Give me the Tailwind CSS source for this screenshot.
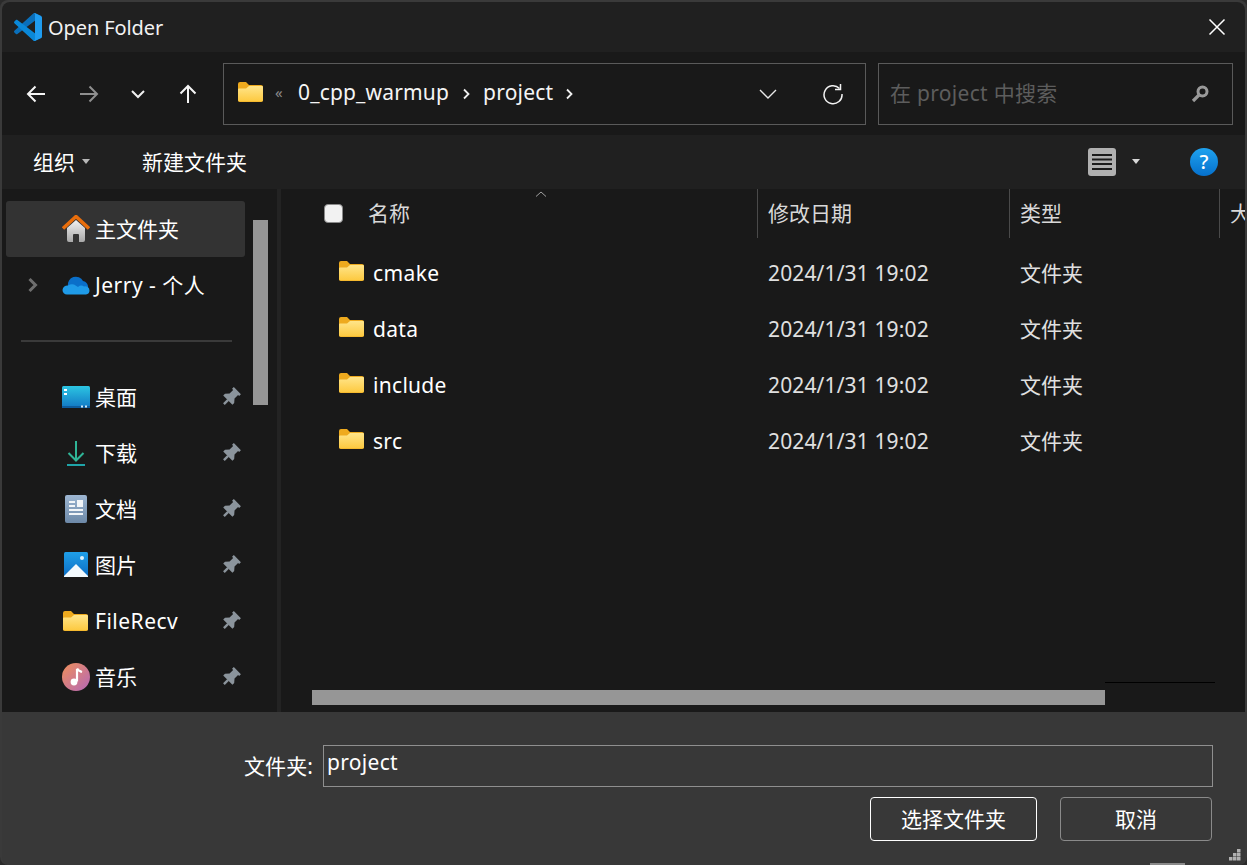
<!DOCTYPE html>
<html lang="zh"><head><meta charset="utf-8"><script src="https://cdn.jsdelivr.net/npm/@tailwindcss/browser@4"></script></head>
<body class="m-0 bg-[#2a2a2a] overflow-hidden">
<svg width="0" height="0" class="absolute"><defs>
<linearGradient id="fg" x1="0" y1="0" x2="0" y2="1"><stop offset="0" stop-color="#ffe58a"/><stop offset="1" stop-color="#fdc93f"/></linearGradient>
<linearGradient id="mg" x1="0" y1="0" x2="1" y2="1"><stop offset="0" stop-color="#f0905a"/><stop offset="1" stop-color="#b467b8"/></linearGradient>
<linearGradient id="hg" x1="0" y1="0" x2="0" y2="1"><stop offset="0" stop-color="#f2f2f2"/><stop offset="1" stop-color="#a8a8a8"/></linearGradient>
<linearGradient id="dg" x1="0" y1="0" x2="0" y2="1"><stop offset="0" stop-color="#2cc5e2"/><stop offset="1" stop-color="#1277c4"/></linearGradient>
<linearGradient id="pg" x1="0" y1="0" x2="0" y2="1"><stop offset="0" stop-color="#1f9fe8"/><stop offset="1" stop-color="#0b6cc4"/></linearGradient>
<linearGradient id="docg" x1="0" y1="0" x2="0" y2="1"><stop offset="0" stop-color="#9db6d2"/><stop offset="1" stop-color="#6d89a8"/></linearGradient>
<symbol id="folder" viewBox="0 0 25 20"><path d="M0 2a2 2 0 0 1 2-2h6l3 3h12a2 2 0 0 1 2 2v13a2 2 0 0 1-2 2H2a2 2 0 0 1-2-2z" fill="#eeaa1e"/><path d="M0 7.500a1 1 0 0 1 1-1h7l3-2.500h13a1 1 0 0 1 1 1v13a1.500 1.500 0 0 1-1.500 1.500h-22A1.500 1.500 0 0 1 0 18z" fill="url(#fg)"/></symbol>
<symbol id="pin" viewBox="-1 -1 20 20"><g transform="rotate(45 9 9)" fill="#8b949c"><path d="M4 0h10v2.500h-1.500v5l3 3.500v2.500H2.500V11l3-3.500v-5H4z"/><rect x="7.800" y="13" width="2.400" height="6"/></g></symbol>
</defs></svg>

<div class="w-[1247px] h-[865px] flex flex-col pl-[2px] pr-[2px] pt-[2px] overflow-hidden rounded-[8px] bg-[#3a3a3a] text-white text-[21px] leading-none relative" style="font-family:'Noto Sans','Noto Sans CJK SC',sans-serif">

  <!-- title -->
  <div class="h-[50px] shrink-0 bg-[#202020] flex items-center pl-[12px] pr-[19px] rounded-t-[8px]">
    <svg width="28" height="28" viewBox="0 0 100 100" class="shrink-0"><path d="M96.500 10.800 75.900.9c-2.400-1.200-5.200-.7-7.100 1.200L1.400 63.600c-1.800 1.700-1.800 4.500 0 6.200l5.500 5c1.500 1.300 3.700 1.400 5.300.2L93.400 13.500c2.700-2 6.600-.1 6.600 3.300v-.2c0-2.400-1.400-4.600-3.500-5.800z" fill="#0a6fba"/><path d="M96.500 89.200 75.900 99.100c-2.400 1.200-5.200.7-7.100-1.200L1.400 36.400c-1.800-1.700-1.800-4.500 0-6.200l5.500-5c1.500-1.300 3.700-1.400 5.300-.2L93.400 86.500c2.700 2 6.600.1 6.600-3.300v.2c0 2.400-1.400 4.600-3.500 5.800z" fill="#0a88d8"/><path d="M75.900 99.100c-2.400 1.200-5.200.6-7.100-1.200 2.300 2.300 6.200.7 6.200-2.600V4.700c0-3.300-3.900-4.900-6.200-2.600 1.900-1.900 4.700-2.400 7.100-1.200l20.600 9.900c2.200 1 3.500 3.200 3.500 5.600v67.200c0 2.400-1.400 4.600-3.500 5.600z" fill="#1f9cf0"/></svg>
    <span class="ml-[6px] text-[20px] text-[#f2f2f2] mt-[2px] tracking-[-0.1px]">Open Folder</span>
    <svg width="18" height="18" viewBox="0 0 18 18" class="ml-auto"><path d="M1.500 1.500l15 15M16.500 1.500l-15 15" stroke="#fff" stroke-width="1.500" fill="none"/></svg>
  </div>

  <!-- nav -->
  <div class="h-[83px] shrink-0 bg-[#191919] flex items-center pr-[12px]">
    <div class="w-[221px] shrink-0 relative h-full flex items-center">
      <svg width="20" height="20" viewBox="0 0 20 20" class="ml-[24px]"><path d="M19 10H2M9.500 2.500 2 10l7.500 7.500" stroke="#f5f5f5" stroke-width="2" fill="none"/></svg>
      <svg width="20" height="20" viewBox="0 0 20 20" class="ml-[33px]"><path d="M1 10h17M10.500 2.500 18 10l-7.500 7.500" stroke="#8f8f8f" stroke-width="2" fill="none"/></svg>
      <svg width="14" height="10" viewBox="0 0 14 10" class="ml-[32px]"><path d="M1 2l6 6 6-6" stroke="#f0f0f0" stroke-width="2" fill="none"/></svg>
      <svg width="20" height="20" viewBox="0 0 20 20" class="ml-[33px]"><path d="M10 19V2M2.500 9.500 10 2l7.500 7.500" stroke="#f5f5f5" stroke-width="2" fill="none"/></svg>
    </div>
    <div class="w-[643px] shrink-0 h-[62px] border border-[#5a5a5a] flex items-center pl-[14px] pr-[21px]">
      <svg width="25" height="20" class="shrink-0 mb-[4px]"><use href="#folder"/></svg>
      <span class="ml-[12px] text-[15px] text-[#8a8a8a] mb-[3px] w-[10px]">«</span>
      <span class="ml-[13px] text-[21px] text-[#f5f5f5] mb-[2px] tracking-[0.17px]">0_cpp_warmup</span>
      <svg width="10" height="14" viewBox="0 0 10 14" class="ml-[13px]"><path d="M2 2.500l4.500 4.500L2 11.500" stroke="#f0f0f0" stroke-width="1.800" fill="none"/></svg>
      <span class="ml-[11px] text-[21px] text-[#f5f5f5] mb-[2px] tracking-[0.2px]">project</span>
      <svg width="10" height="14" viewBox="0 0 10 14" class="ml-[12px]"><path d="M2 2.500l4.500 4.500L2 11.500" stroke="#f0f0f0" stroke-width="1.800" fill="none"/></svg>
      <svg width="18" height="10" viewBox="0 0 18 10" class="ml-auto"><path d="M1 1l8 8 8-8" stroke="#e8e8e8" stroke-width="1.400" fill="none"/></svg>
      <svg width="22" height="22" viewBox="0 0 22 22" class="ml-[45px]"><path d="M17.500 5.500A9 9 0 1 0 20 11" stroke="#f2f2f2" stroke-width="1.500" fill="none"/><path d="M18.500 1v5.500H13" stroke="#f2f2f2" stroke-width="1.500" fill="none"/></svg>
    </div>
    <div class="ml-[12px] flex-1 h-[62px] border border-[#5a5a5a] flex items-center pl-[11px] pr-[23px]">
      <span class="text-[21px] text-[#5d5d5d] tracking-[0.3px]">在 project 中搜索</span>
      <svg width="18" height="18" viewBox="0 0 18 18" class="ml-auto"><circle cx="11.500" cy="6.500" r="4.500" stroke="#999" stroke-width="3" fill="none"/><path d="M8 10l-6 6" stroke="#999" stroke-width="3.200"/></svg>
    </div>
  </div>

  <!-- toolbar -->
  <div class="h-[54px] shrink-0 bg-[#202020] flex items-center pl-[31px] pr-[27px]">
    <span>组织</span>
    <svg width="10" height="6" viewBox="0 0 10 6" class="ml-[6px]"><path d="M1 0h8L5 5z" fill="#b8b8b8"/></svg>
    <span class="ml-[51px]">新建文件夹</span>
    <svg width="28" height="28" viewBox="0 0 28 28" class="ml-auto"><rect width="28" height="28" rx="3" fill="#b0b0b0"/><path d="M4 7h20M4 11.500h20M4 16h20M4 21h20" stroke="#1c1c1c" stroke-width="2"/></svg>
    <svg width="10" height="6" viewBox="0 0 10 6" class="ml-[15px]"><path d="M1 0h8L5 5z" fill="#d8d8d8"/></svg>
    <div class="ml-[49px] w-[28px] h-[28px] rounded-full bg-[#0a82dc] flex items-center justify-center text-[20px] font-medium text-white" style="background:linear-gradient(#1fa2ee,#0570cc)">?</div>
  </div>

  <!-- body -->
  <div class="flex-1 min-h-0 bg-[#191919] flex overflow-hidden">
    <!-- sidebar -->
    <div class="w-[275px] shrink-0 flex overflow-hidden">
      <div class="w-[239px] ml-[4px] shrink-0 pt-[12px] flex flex-col">
        <div class="h-[56px] shrink-0 rounded-[3px] bg-[#333333] flex items-center relative pl-[56px]">
          <svg width="28" height="28" viewBox="0 0 28 28"><path d="M5 13 14 5l9 8v12a2 2 0 0 1-2 2h-4v-7a1 1 0 0 0-1-1h-4a1 1 0 0 0-1 1v7H7a2 2 0 0 1-2-2z" fill="url(#hg)"/><path d="M1 13.500 14 1.500l13 12" stroke="#e96e0c" stroke-width="3.500" fill="none"/></svg>
          <span class="ml-[5px]">主文件夹</span>
        </div>
        <div class="h-[56px] shrink-0 flex items-center relative pl-[56px]">
          <svg width="12" height="16" viewBox="0 0 12 16" class="absolute left-[21px] top-[20px]"><path d="M2.500 2l6 6-6 6" stroke="#6e6e6e" stroke-width="3" fill="none"/></svg>
          <svg width="28" height="20" viewBox="0 0 28 20"><path d="M6 11A8 8 0 0 1 21 6a6 6 0 0 1 5 7L11 16z" fill="#0a6fc9"/><path d="M5 19.500A4.500 4.500 0 0 1 .5 15 5 5 0 0 1 6 10.500 7 7 0 0 1 12 9.500l4 2.500a5 5 0 0 1 6-.5 4.200 4.200 0 0 1 5.500 4A4 4 0 0 1 24 19.500z" fill="#1f9be8"/></svg>
          <span class="ml-[5px] tracking-[0.5px]">Jerry - 个人</span>
        </div>
        <div class="h-[56px] shrink-0 flex items-center pl-[15px]"><div class="w-[211px] h-[2px] bg-[#3a3a3a]"></div></div>
        <div class="h-[56px] shrink-0 flex items-center pl-[56px] pr-[4px]">
          <svg width="28" height="22" viewBox="0 0 28 22"><rect width="28" height="22" rx="1.500" fill="url(#dg)"/><rect y="20" width="28" height="2" fill="#0d5c9e"/><rect x="2" y="3" width="3" height="2" fill="#fff"/><rect x="2" y="7" width="3" height="2" fill="#fff"/><rect x="19" y="19.500" width="2" height="2" fill="#cfe8f7"/><rect x="23" y="19.500" width="2" height="2" fill="#cfe8f7"/></svg>
          <span class="ml-[5px]">桌面</span>
          <svg width="20" height="20" class="ml-auto"><use href="#pin"/></svg>
        </div>
        <div class="h-[56px] shrink-0 flex items-center pl-[56px] pr-[4px]">
          <svg width="28" height="26" viewBox="0 0 28 26"><path d="M14 1v19M6.500 13 14 20.500 21.500 13" stroke="#2fb597" stroke-width="2" fill="none"/><path d="M5 25h18" stroke="#1fa4a8" stroke-width="2"/></svg>
          <span class="ml-[5px]">下载</span>
          <svg width="20" height="20" class="ml-auto"><use href="#pin"/></svg>
        </div>
        <div class="h-[56px] shrink-0 flex items-center pl-[56px] pr-[4px]">
          <svg width="28" height="28" viewBox="0 0 28 28"><rect x="3" y="0" width="22" height="28" rx="2" fill="url(#docg)"/><path d="M7 7h6M7 11h6M7 15h14M7 19h14" stroke="#f2f5f8" stroke-width="2"/><rect x="15" y="5" width="6" height="7" fill="#f2f5f8"/></svg>
          <span class="ml-[5px]">文档</span>
          <svg width="20" height="20" class="ml-auto"><use href="#pin"/></svg>
        </div>
        <div class="h-[56px] shrink-0 flex items-center pl-[56px] pr-[4px]">
          <svg width="28" height="26" viewBox="0 0 28 26"><rect x="2" y="0" width="24" height="25" rx="1.500" fill="url(#pg)"/><circle cx="20" cy="6" r="2" fill="#dff2fc"/><path d="M2 24 14 12l12 12v1H2z" fill="#f2f9fd"/></svg>
          <span class="ml-[5px]">图片</span>
          <svg width="20" height="20" class="ml-auto"><use href="#pin"/></svg>
        </div>
        <div class="h-[56px] shrink-0 flex items-center pl-[57px] pr-[4px]">
          <svg width="25" height="20"><use href="#folder"/></svg>
          <span class="ml-[7px] tracking-[0.5px]">FileRecv</span>
          <svg width="20" height="20" class="ml-auto"><use href="#pin"/></svg>
        </div>
        <div class="h-[56px] shrink-0 flex items-center pl-[56px] pr-[4px]">
          <svg width="28" height="28" viewBox="0 0 28 28"><circle cx="14" cy="14" r="14" fill="url(#mg)"/><path d="M15 6v12.500" stroke="#fff" stroke-width="2.200"/><path d="M15 5.500c1 2.500 3.500 3 5 3.500" stroke="#fff" stroke-width="2.200" fill="none"/><circle cx="12" cy="19" r="3.400" fill="#fff"/></svg>
          <span class="ml-[5px]">音乐</span>
          <svg width="20" height="20" class="ml-auto"><use href="#pin"/></svg>
        </div>
      </div>
      <div class="ml-[8px] mt-[31px] w-[15px] h-[185px] bg-[#969696] shrink-0"></div>
    </div>
    <!-- splitter -->
    <div class="w-[4px] shrink-0 bg-[#232323]"></div>
    <!-- file list -->
    <div class="flex-1 min-w-0 relative flex flex-col overflow-hidden">
      <div class="h-[49px] shrink-0 flex items-stretch relative">
        <div class="w-[477px] shrink-0 border-r border-[#4a4a4a] flex items-center relative">
          <div class="ml-[43px] w-[19px] h-[19px] rounded-[4px] bg-[#f2f2f2] border border-[#8a8a8a] shrink-0"></div>
          <span class="ml-[25px] text-[#d8d8d8]">名称</span>
          <svg width="12" height="6" viewBox="0 0 12 6" class="absolute left-[254px] top-[2px]"><path d="M1 5.500 6 1l5 4.500" stroke="#a0a0a0" stroke-width="1" fill="none"/></svg>
        </div>
        <div class="w-[252px] shrink-0 border-r border-[#4a4a4a] flex items-center pl-[10px] text-[#d8d8d8]">修改日期</div>
        <div class="w-[210px] shrink-0 border-r border-[#4a4a4a] flex items-center pl-[10px] text-[#d8d8d8]">类型</div>
        <div class="flex-1 overflow-hidden flex items-center pl-[10px] text-[#d8d8d8] whitespace-nowrap">大小</div>
      </div>
      <div class="h-[56px] shrink-0 mt-[7px] flex items-center">
        <svg width="25" height="20" class="ml-[58px] mb-[4px] shrink-0"><use href="#folder"/></svg>
        <span class="ml-[9px] w-[395px] shrink-0 tracking-[0.4px]">cmake</span><span class="w-[252px] shrink-0 text-[#e0e0e0] tracking-[0.13px]">2024/1/31 19:02</span><span class="text-[#e0e0e0]">文件夹</span>
      </div>
      <div class="h-[56px] shrink-0 flex items-center">
        <svg width="25" height="20" class="ml-[58px] mb-[4px] shrink-0"><use href="#folder"/></svg>
        <span class="ml-[9px] w-[395px] shrink-0 tracking-[0.3px]">data</span><span class="w-[252px] shrink-0 text-[#e0e0e0] tracking-[0.13px]">2024/1/31 19:02</span><span class="text-[#e0e0e0]">文件夹</span>
      </div>
      <div class="h-[56px] shrink-0 flex items-center">
        <svg width="25" height="20" class="ml-[58px] mb-[4px] shrink-0"><use href="#folder"/></svg>
        <span class="ml-[9px] w-[395px] shrink-0 tracking-[0.3px]">include</span><span class="w-[252px] shrink-0 text-[#e0e0e0] tracking-[0.13px]">2024/1/31 19:02</span><span class="text-[#e0e0e0]">文件夹</span>
      </div>
      <div class="h-[56px] shrink-0 flex items-center">
        <svg width="25" height="20" class="ml-[58px] mb-[4px] shrink-0"><use href="#folder"/></svg>
        <span class="ml-[9px] w-[395px] shrink-0 tracking-[0.3px]">src</span><span class="w-[252px] shrink-0 text-[#e0e0e0] tracking-[0.13px]">2024/1/31 19:02</span><span class="text-[#e0e0e0]">文件夹</span>
      </div>
      <!-- scroll corner line + h scrollbar -->
      <div class="absolute left-[824px] top-[493px] w-[110px] h-[1px] bg-black"></div>
      <div class="absolute left-[31px] top-[501px] w-[793px] h-[15px] bg-[#969696]"></div>
    </div>
  </div>

  <!-- footer -->
  <div class="h-[153px] shrink-0 bg-[#383838] relative pt-[33px] pr-[32px] flex flex-col items-end rounded-b-[8px]">
    <div class="flex items-center">
      <span class="mr-[10px] tracking-[0.1px]">文件夹:</span>
      <div class="w-[890px] h-[42px] border border-[#8f8f8f] flex items-center pl-[3px] pb-[8px] tracking-[0.3px]">project</div>
    </div>
    <div class="flex mt-[10px] mr-[1px]">
      <div class="w-[167px] h-[44px] rounded-[4px] border border-white flex items-center justify-center">选择文件夹</div>
      <div class="ml-[23px] w-[152px] h-[44px] rounded-[4px] border border-[#8a8a8a] flex items-center justify-center">取消</div>
    </div>
    <svg width="12" height="12" viewBox="0 0 12 12" class="absolute right-[4px] bottom-[4px]"><path d="M8 0h3.500v3.500H8zM4 4h3.500v3.500H4zM8 4h3.500v3.500H8zM0 8h3.500v3.500H0zM4 8h3.500v3.500H4zM8 8h3.500v3.500H8z" fill="#b0b0b0"/></svg>
  </div>
  <div class="absolute left-[1150px] bottom-0 w-[35px] h-[2px] bg-[#8a8a8a]"></div>
</div>
</body></html>
